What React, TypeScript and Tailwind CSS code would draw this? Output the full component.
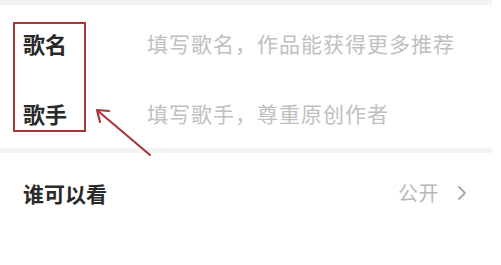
import React from 'react';

const font = { fontFamily: '"Noto Sans CJK SC", "Noto Sans", sans-serif' };

function Row({ label, hint }: { label: string; hint: string }) {
  return (
    <div className="flex h-[70px] items-center pl-[23px]">
      <span className="w-[124px] text-[22px] font-bold text-[#2a2a2a]">{label}</span>
      <span className="text-[21px] tracking-[1px] text-[#c0c0c0]">{hint}</span>
    </div>
  );
}

export default function App() {
  return (
    <div className="relative h-[265px] w-[501px] overflow-hidden bg-white leading-none" style={font}>
      <div className="h-[5px] w-[492px] bg-[#f3f3f3]" />
      <div className="pt-[3px]">
        <Row label="歌名" hint="填写歌名，作品能获得更多推荐" />
        <Row label="歌手" hint="填写歌手，尊重原创作者" />
      </div>
      <div className="h-[5px] w-[492px] bg-[#f3f3f3]" />
      <div className="flex h-[80px] items-center justify-between pl-[23px] pr-[34px]">
        <span className="text-[21px] font-bold text-[#2a2a2a]">谁可以看</span>
        <div className="flex items-center gap-[18px]">
          <span className="text-[20px] tracking-[0.5px] text-[#b8b8b8]">公开</span>
          <svg width="10" height="16" viewBox="0 0 10 16" fill="none">
            <path d="M2 2 L8 8 L2 14" stroke="#a8a8a8" strokeWidth="1.8" strokeLinecap="round" strokeLinejoin="round" />
          </svg>
        </div>
      </div>

      {/* red annotation box */}
      <div className="absolute left-[13px] top-[22px] h-[110px] w-[73px] border-2 border-[#a8373a]" />
      <svg className="absolute left-0 top-0" width="501" height="265" viewBox="0 0 501 265" fill="none">
        <path d="M150 155 L98 111" stroke="#a8373a" strokeWidth="2.2" strokeLinecap="round" />
        <path d="M109 111 L97 110 L100 122" stroke="#a8373a" strokeWidth="2.2" strokeLinecap="round" strokeLinejoin="round" />
      </svg>
    </div>
  );
}
